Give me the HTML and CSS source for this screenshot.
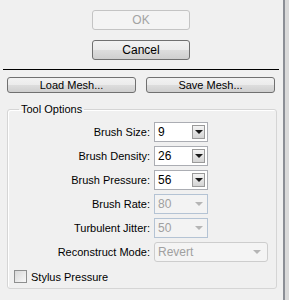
FILE: index.html
```html
<!DOCTYPE html>
<html lang="en">
<head>
    <meta charset="UTF-8">
    <meta name="viewport" content="width=device-width, initial-scale=1.0">
    <title>Tool Options</title>
    <link rel="stylesheet" href="styles.css">
</head>
<body>

<div class="dialog">
    <div class="actions">
        <button class="btn" disabled>OK</button>
        <button class="btn">Cancel</button>
    </div>

    <div class="rule"></div>

    <div class="mesh-row">
        <button class="btn mesh">Load Mesh...</button>
        <button class="btn mesh">Save Mesh...</button>
    </div>

    <fieldset class="group">
        <legend>Tool Options</legend>

        <div class="field">
            <label>Brush Size:</label>
            <div class="combo"><span>9</span><span class="drop"><i class="arrow"></i></span></div>
        </div>
        <div class="field">
            <label>Brush Density:</label>
            <div class="combo"><span>26</span><span class="drop"><i class="arrow"></i></span></div>
        </div>
        <div class="field">
            <label>Brush Pressure:</label>
            <div class="combo"><span>56</span><span class="drop"><i class="arrow"></i></span></div>
        </div>
        <div class="field">
            <label>Brush Rate:</label>
            <div class="combo off"><span>80</span><span class="drop"><i class="arrow"></i></span></div>
        </div>
        <div class="field">
            <label>Turbulent Jitter:</label>
            <div class="combo off"><span>50</span><span class="drop"><i class="arrow"></i></span></div>
        </div>
        <div class="field">
            <label>Reconstruct Mode:</label>
            <div class="select off"><span>Revert</span><i class="arrow"></i></div>
        </div>

        <div class="check-row">
            <span class="check"></span>
            <span>Stylus Pressure</span>
        </div>
    </fieldset>
</div>
<div class="edge"></div>

</body>
</html>
```

FILE: styles.css
```css
body {
    font-family: 'Liberation Sans', Arial, sans-serif;
    font-size: 11px;
    color: #000000;
    background-color: #f0f0f0;
    margin: 0;
    height: 300px;
    display: flex;
    overflow: hidden;
}

.dialog {
    width: 285px;
    display: flex;
    flex-direction: column;
}

.edge {
    width: 4px;
    border-left: 2px solid #8c8f96;
    background: #dadada;
}

.actions {
    display: flex;
    flex-direction: column;
    gap: 10px;
    padding: 10px 0 0 92px;
}

.btn {
    font-family: inherit;
    font-size: 12px;
    color: #000000;
    width: 98px;
    height: 20px;
    padding: 0;
    border: 1px solid #707070;
    border-radius: 3px;
    background: linear-gradient(#f2f2f2 0%, #ebebeb 50%, #dddddd 51%, #cfcfcf 100%);
}

.btn:disabled {
    color: #a3a3a3;
    border-color: #c4c4c4;
    background: #f4f4f4;
}

.rule {
    height: 1px;
    background: #000000;
    margin: 9px 4px 0 3px;
}

.mesh-row {
    display: flex;
    gap: 10px;
    padding: 7px 0 0 7px;
}

.btn.mesh {
    width: 129px;
    height: 16px;
    font-size: 11px;
    line-height: 14px;
}

.group {
    width: 270px;
    box-sizing: border-box;
    margin: 9px 0 0 7px;
    padding: 6px 0 0 0;
    height: 187px;
    border: 1px solid #d5d5d5;
    border-radius: 3px;
    box-shadow: inset 1px 1px 0 #ffffff;
}

.group legend {
    font-size: 11px;
    line-height: 14px;
    padding: 0 2px;
    margin-left: 11px;
}

.field {
    display: flex;
    align-items: center;
    height: 20px;
    margin-bottom: 4px;
}

.field label {
    width: 142px;
    text-align: right;
    margin-right: 4px;
}

.combo,
.select {
    box-sizing: border-box;
    height: 20px;
    display: flex;
    align-items: center;
    justify-content: space-between;
    font-size: 12px;
    padding-left: 3px;
    border: 1px solid #abadb3;
    background: #ffffff;
}

.combo {
    width: 54px;
    padding-right: 2px;
}

.drop {
    box-sizing: border-box;
    width: 13px;
    height: 14px;
    display: flex;
    align-items: center;
    justify-content: center;
    border: 1px solid #9a9a9a;
    background: linear-gradient(#f4f4f4, #d4d4d4);
}

.arrow {
    width: 0;
    height: 0;
    border-left: 4px solid transparent;
    border-right: 4px solid transparent;
    border-top: 4px solid #1a1a1a;
}

.combo.off {
    color: #a0a0a0;
    border-color: #b4c3d4;
    background: #f3f3f3;
}

.combo.off .drop {
    border-color: transparent;
    background: transparent;
}

.combo.off .arrow,
.select .arrow {
    border-top-color: #b5b5b5;
}

.select {
    width: 114px;
    padding-right: 6px;
    border-radius: 3px;
    border-color: #cdcdcd;
    color: #a0a0a0;
    background: #f4f4f4;
}

.check-row {
    display: flex;
    align-items: center;
    gap: 4px;
    padding: 4px 0 0 6px;
}

.check {
    box-sizing: border-box;
    width: 13px;
    height: 13px;
    border: 1px solid #8e8f8f;
    background: linear-gradient(135deg, #d8d8d8, #f8f8f8);
}
```
